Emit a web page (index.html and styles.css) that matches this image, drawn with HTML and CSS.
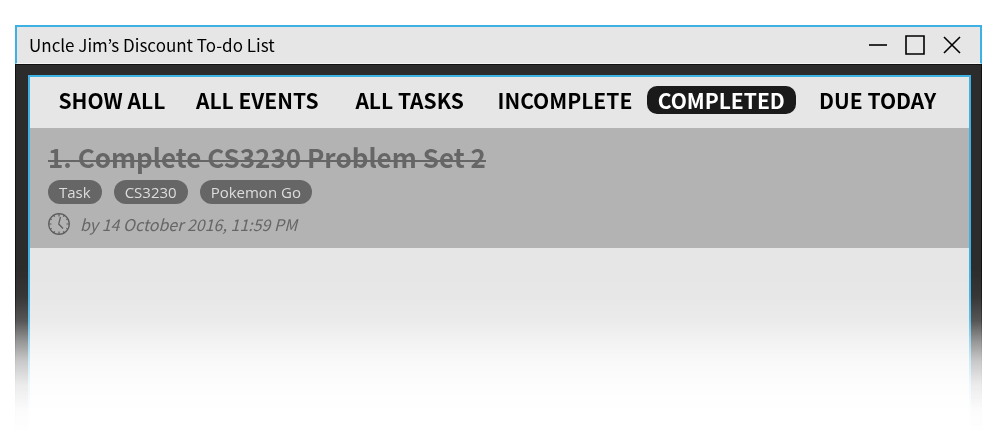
FILE: index.html
```html
<!DOCTYPE html>
<html lang="en">
<head>
<meta charset="utf-8">
<meta name="viewport" content="width=device-width, initial-scale=1">
<title>Uncle Jim’s Discount To-do List</title>
<link rel="stylesheet" href="styles.css">
</head>
<body>
<div class="window">
  <header class="titlebar">
    <h1 class="app-title">Uncle Jim’s Discount To-do List</h1>
    <div class="controls">
      <button class="control" type="button" aria-label="Minimize"><svg viewBox="0 0 20 20"><path d="M1 10H19"/></svg></button>
      <button class="control" type="button" aria-label="Maximize"><svg viewBox="0 0 20 20"><path d="M1 1H19V19H1Z"/></svg></button>
      <button class="control" type="button" aria-label="Close"><svg viewBox="0 0 20 20"><path d="M2 2L18 18M18 2L2 18"/></svg></button>
    </div>
  </header>
  <div class="frame">
    <main class="panel">
      <nav class="filters">
        <button class="filter" type="button">SHOW ALL</button>
        <button class="filter" type="button">ALL EVENTS</button>
        <button class="filter" type="button">ALL TASKS</button>
        <button class="filter" type="button">INCOMPLETE</button>
        <button class="filter active" type="button" aria-pressed="true">COMPLETED</button>
        <button class="filter" type="button">DUE TODAY</button>
      </nav>
      <article class="task">
        <h2 class="task-title">1. Complete CS3230 Problem Set 2</h2>
        <ul class="tags">
          <li class="tag">Task</li>
          <li class="tag">CS3230</li>
          <li class="tag">Pokemon Go</li>
        </ul>
        <p class="due">
          <svg class="clock" viewBox="0 0 22 22" aria-hidden="true"><circle cx="11" cy="11" r="10.3"/><path d="M12.500 4L10.700 11L15 15.500M11 1V3.500M11 18.500V21M1 11H3.500M18.500 11H21M6 2.340L6.700 3.600M16 2.340L15.300 3.600M2.340 6L3.600 6.700M19.660 6L18.400 6.700M2.340 16L3.600 15.300M19.660 16L18.400 15.300M6 19.660L6.700 18.400M16 19.660L15.300 18.400"/></svg>
          <time datetime="2016-10-14T23:59">by 14 October 2016, 11:59 PM</time>
        </p>
      </article>
    </main>
  </div>
</div>
</body>
</html>
```
FILE: styles.css
```css
* {
  box-sizing: border-box;
}

body {
  margin: 0;
  background: #fff;
  color: #000;
  font-family: "Noto Sans CJK KR", "Noto Sans", sans-serif;
}

button {
  border: 0;
  padding: 0;
  background: none;
  color: inherit;
  font: inherit;
}

.window {
  display: flex;
  flex-direction: column;
  min-height: 100vh;
  padding: 25px 18px 0 15px;
  -webkit-mask-image: linear-gradient(to top, transparent 0, rgba(0, 0, 0, 0.02) 24px, rgba(0, 0, 0, 0.09) 48px, rgba(0, 0, 0, 0.26) 72px, rgba(0, 0, 0, 0.5) 92px, rgba(0, 0, 0, 0.8) 112px, rgba(0, 0, 0, 0.95) 136px, #000 164px);
  mask-image: linear-gradient(to top, transparent 0, rgba(0, 0, 0, 0.02) 24px, rgba(0, 0, 0, 0.09) 48px, rgba(0, 0, 0, 0.26) 72px, rgba(0, 0, 0, 0.5) 92px, rgba(0, 0, 0, 0.8) 112px, rgba(0, 0, 0, 0.95) 136px, #000 164px);
}

.titlebar {
  display: flex;
  align-items: center;
  justify-content: space-between;
  height: 39px;
  padding: 0 18px 0 12px;
  border: 2px solid #3eb1e4;
  border-bottom: 1px solid #f4f4f4;
  background: #e6e6e6;
}

.app-title {
  margin: 0;
  font-size: 17px;
  font-weight: 400;
  line-height: 24px;
}

.controls {
  display: flex;
  gap: 17px;
}

.control {
  width: 20px;
  height: 20px;
}

.control svg {
  display: block;
  fill: none;
  stroke: #000;
  stroke-width: 1.6;
}

.frame {
  display: flex;
  flex: 1;
  padding: 10px 10px 0 12px;
  border: 1px solid #101010;
  border-bottom: 0;
  background: #2d2c2c;
}

.panel {
  flex: 1;
  border: 2px solid #3eb1e4;
  border-bottom: 0;
  background: #e6e6e6;
}

.filters {
  display: grid;
  grid-template-columns: 146fr 145fr 160fr 151fr 162fr 151fr;
  justify-items: center;
  padding: 9px 16px 14px 9px;
}

.filter {
  height: 28px;
  padding: 0 6px;
  border-radius: 10px;
  font-size: 21px;
  font-weight: 700;
  line-height: 28px;
  white-space: nowrap;
}

.filter.active {
  padding: 0 11px;
  background: #1a1a1a;
  color: #fff;
}

.task {
  padding: 11px 18px 12px;
  background: #b3b3b3;
  color: #666;
}

.task-title {
  width: fit-content;
  margin: 0;
  background: linear-gradient(#666, #666) 0 21px / 100% 2px no-repeat;
  font-size: 26px;
  font-weight: 700;
  line-height: 36px;
}

.tags {
  display: flex;
  gap: 12px;
  margin: 5px 0 8px;
  padding: 0;
  list-style: none;
}

.tag {
  padding: 0 11px;
  border-radius: 12px;
  background: #666;
  color: #ddd;
  font-family: "Open Sans", "Noto Sans", sans-serif;
  font-size: 15px;
  line-height: 24px;
}

.due {
  display: flex;
  align-items: center;
  gap: 10px;
  margin: 0;
  font-size: 16px;
  font-style: italic;
  line-height: 24px;
}

.clock {
  width: 22px;
  height: 22px;
  fill: none;
  stroke: #5c5c5c;
  stroke-width: 1.2;
}
```
